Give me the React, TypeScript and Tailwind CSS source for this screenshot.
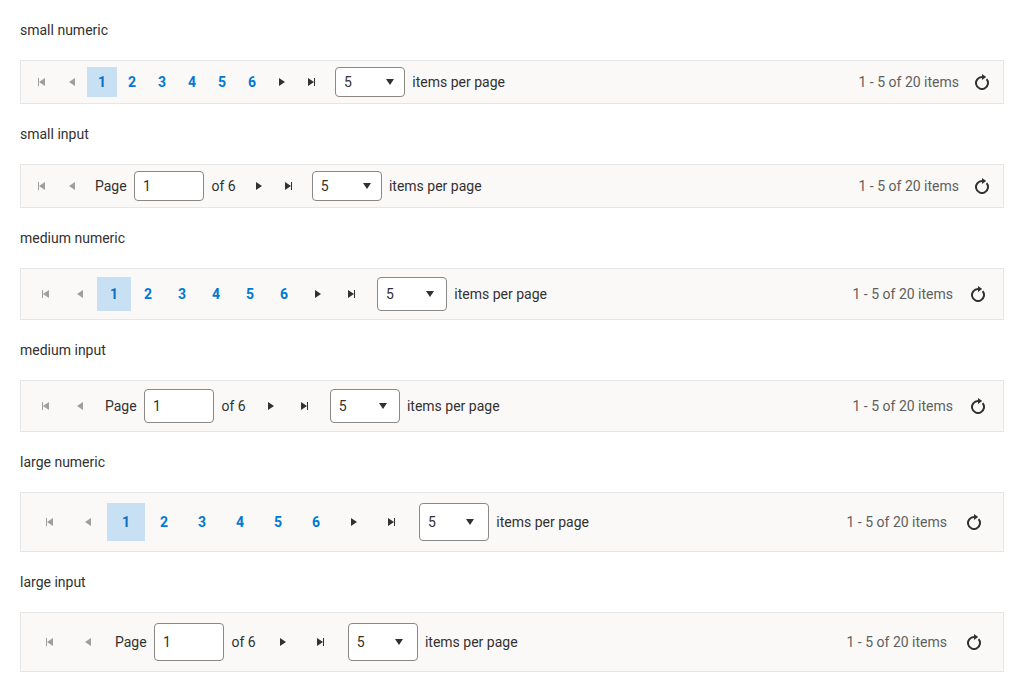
import React from "react";

type Size = "small" | "medium" | "large";

const sizes: Record<Size, { pad: string; button: string; field: string; caret: string }> = {
  small: { pad: "p-[6px]", button: "size-[30px]", field: "h-[30px]", caret: "pr-[6px]" },
  medium: { pad: "p-2", button: "size-[34px]", field: "h-[34px]", caret: "pr-[8px]" },
  large: { pad: "p-[10px]", button: "size-[38px]", field: "h-[38px]", caret: "pr-[10px]" },
};

const icons = {
  first: "M128 128v256h32V256l192 128V128L160 256V128z",
  prev: "M352 128 160 256l192 128z",
  next: "M160 128l192 128-192 128z",
  last: "M352 128v256h-32V256L128 384V128l192 128V128z",
  down: "M128 160l128 192 128-192z",
};

function Icon({ name }: { name: keyof typeof icons }) {
  return (
    <svg viewBox="0 0 512 512" className="size-4 shrink-0 fill-current">
      <path d={icons[name]} />
    </svg>
  );
}

function RefreshIcon() {
  return (
    <svg viewBox="0 0 16 16" className="size-4 shrink-0">
      <path d="M12.58 5.14A6 6 0 1 1 8 3" fill="none" stroke="currentColor" strokeWidth="2" />
      <path d="M8 0l4.2 3L8 6z" fill="currentColor" />
    </svg>
  );
}

function NavButton({ size, icon, disabled }: { size: Size; icon: keyof typeof icons; disabled?: boolean }) {
  return (
    <button
      disabled={disabled}
      className={`flex shrink-0 items-center justify-center ${disabled ? "text-[#a19f9d]" : "text-[#323130]"} ${sizes[size].button}`}
    >
      <Icon name={icon} />
    </button>
  );
}

function Pager({ size, input }: { size: Size; input?: boolean }) {
  const s = sizes[size];
  return (
    <div className={`flex items-center justify-between border border-[#e6e6e6] bg-[#faf9f8] ${s.pad}`}>
      <div className="flex items-center gap-[7.3px]">
        <div className="mr-[0.7px] flex items-center">
          <NavButton size={size} icon="first" disabled />
          <NavButton size={size} icon="prev" disabled />
          {input ? (
            <div className="flex items-center gap-[7.4px] pr-[8px] pl-2">
              <span>Page</span>
              <div className={`flex w-[70px] items-center rounded-[4px] border border-[#8a8886] bg-white px-2 ${s.field}`}>1</div>
              <span>of 6</span>
            </div>
          ) : (
            [1, 2, 3, 4, 5, 6].map((n) => (
              <button
                key={n}
                className={`flex items-center justify-center font-bold ${n === 1 ? "bg-[#c7e0f4] text-[#106ebe]" : "text-[#0078d4]"} ${s.button}`}
              >
                {n}
              </button>
            ))
          )}
          <NavButton size={size} icon="next" />
          <NavButton size={size} icon="last" />
        </div>
        <div className={`flex w-[70px] items-center justify-between rounded-[4px] border border-[#8a8886] bg-white pl-2 ${s.caret} ${s.field}`}>
          <span>5</span>
          <Icon name="down" />
        </div>
        <span>items per page</span>
      </div>
      <div className="flex items-center gap-2">
        <span className="text-[#605e5c]">1 - 5 of 20 items</span>
        <button className={`flex items-center justify-center ${s.button}`}>
          <RefreshIcon />
        </button>
      </div>
    </div>
  );
}

export default function App() {
  return (
    <main className="flex min-h-screen flex-col gap-5 bg-white p-5 font-[Roboto,sans-serif] text-[14px] leading-5 text-[#323130]">
      {(["small", "medium", "large"] as Size[]).map((size) => (
        <React.Fragment key={size}>
          <div>{size} numeric</div>
          <Pager size={size} />
          <div>{size} input</div>
          <Pager size={size} input />
        </React.Fragment>
      ))}
    </main>
  );
}
